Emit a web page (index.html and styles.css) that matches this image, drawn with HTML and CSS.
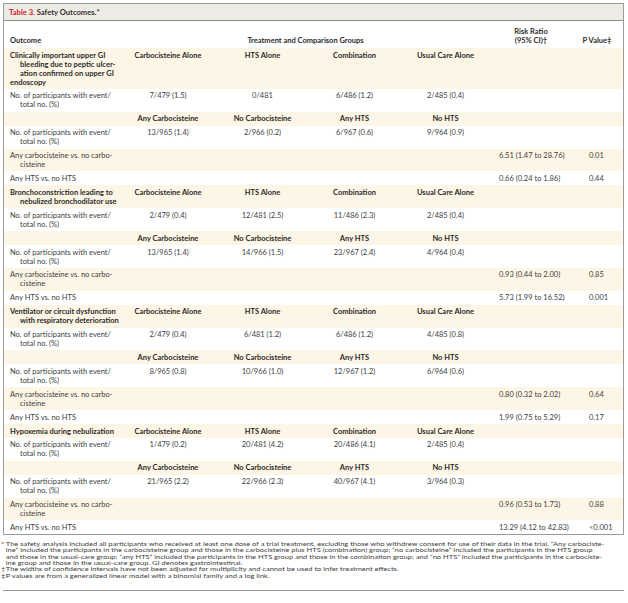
FILE: index.html
```html
<!DOCTYPE html>
<html lang="en">
<head>
<meta charset="utf-8">
<title>Table 3. Safety Outcomes</title>
<link rel="stylesheet" href="styles.css">
</head>
<body>
<div class="page">
  <div class="box">
    <div class="title"><span class="tnum">Table 3.</span> Safety Outcomes.*</div>
    <table class="tbl">
      <colgroup>
        <col class="w1"><col class="w2"><col class="w3"><col class="w4"><col class="w5"><col class="w6"><col class="w7">
      </colgroup>
      <thead>
        <tr>
          <th class="out">Outcome</th>
          <th colspan="4">Treatment and Comparison Groups</th>
          <th><span class="ln">Risk Ratio</span><span class="ln">(95% CI)†</span></th>
          <th>P Value‡</th>
        </tr>
      </thead>
      <tbody>
        <tr class="grp">
          <td class="out b"><span class="ln">Clinically important upper GI</span><span class="ln ind">bleeding due to peptic ulcer-</span><span class="ln ind">ation confirmed on upper GI</span><span class="ln">endoscopy</span></td>
          <td class="b">Carbocisteine Alone</td><td class="b">HTS Alone</td><td class="b">Combination</td><td class="b">Usual Care Alone</td><td></td><td></td>
        </tr>
        <tr>
          <td class="out"><span class="ln">No. of participants with event/</span><span class="ln ind">total no. (%)</span></td>
          <td>7/479 (1.5)</td><td>0/481</td><td>6/486 (1.2)</td><td>2/485 (0.4)</td><td></td><td></td>
        </tr>
        <tr>
          <td class="out"></td>
          <td class="b">Any Carbocisteine</td><td class="b">No Carbocisteine</td><td class="b">Any HTS</td><td class="b">No HTS</td><td></td><td></td>
        </tr>
        <tr>
          <td class="out"><span class="ln">No. of participants with event/</span><span class="ln ind">total no. (%)</span></td>
          <td>13/965 (1.4)</td><td>2/966 (0.2)</td><td>6/967 (0.6)</td><td>9/964 (0.9)</td><td></td><td></td>
        </tr>
        <tr>
          <td class="out"><span class="ln">Any carbocisteine vs. no carbo-</span><span class="ln ind">cisteine</span></td>
          <td></td><td></td><td></td><td></td><td class="rr">6.51 (1.47 to 28.76)</td><td class="pv">0.01</td>
        </tr>
        <tr>
          <td class="out">Any HTS vs. no HTS</td>
          <td></td><td></td><td></td><td></td><td class="rr">0.66 (0.24 to 1.86)</td><td class="pv">0.44</td>
        </tr>

        <tr class="grp">
          <td class="out b"><span class="ln">Bronchoconstriction leading to</span><span class="ln ind">nebulized bronchodilator use</span></td>
          <td class="b">Carbocisteine Alone</td><td class="b">HTS Alone</td><td class="b">Combination</td><td class="b">Usual Care Alone</td><td></td><td></td>
        </tr>
        <tr>
          <td class="out"><span class="ln">No. of participants with event/</span><span class="ln ind">total no. (%)</span></td>
          <td>2/479 (0.4)</td><td>12/481 (2.5)</td><td>11/486 (2.3)</td><td>2/485 (0.4)</td><td></td><td></td>
        </tr>
        <tr>
          <td class="out"></td>
          <td class="b">Any Carbocisteine</td><td class="b">No Carbocisteine</td><td class="b">Any HTS</td><td class="b">No HTS</td><td></td><td></td>
        </tr>
        <tr>
          <td class="out"><span class="ln">No. of participants with event/</span><span class="ln ind">total no. (%)</span></td>
          <td>13/965 (1.4)</td><td>14/966 (1.5)</td><td>23/967 (2.4)</td><td>4/964 (0.4)</td><td></td><td></td>
        </tr>
        <tr>
          <td class="out"><span class="ln">Any carbocisteine vs. no carbo-</span><span class="ln ind">cisteine</span></td>
          <td></td><td></td><td></td><td></td><td class="rr">0.93 (0.44 to 2.00)</td><td class="pv">0.85</td>
        </tr>
        <tr>
          <td class="out">Any HTS vs. no HTS</td>
          <td></td><td></td><td></td><td></td><td class="rr">5.73 (1.99 to 16.52)</td><td class="pv">0.001</td>
        </tr>

        <tr class="grp">
          <td class="out b"><span class="ln">Ventilator or circuit dysfunction</span><span class="ln ind">with respiratory deterioration</span></td>
          <td class="b">Carbocisteine Alone</td><td class="b">HTS Alone</td><td class="b">Combination</td><td class="b">Usual Care Alone</td><td></td><td></td>
        </tr>
        <tr>
          <td class="out"><span class="ln">No. of participants with event/</span><span class="ln ind">total no. (%)</span></td>
          <td>2/479 (0.4)</td><td>6/481 (1.2)</td><td>6/486 (1.2)</td><td>4/485 (0.8)</td><td></td><td></td>
        </tr>
        <tr>
          <td class="out"></td>
          <td class="b">Any Carbocisteine</td><td class="b">No Carbocisteine</td><td class="b">Any HTS</td><td class="b">No HTS</td><td></td><td></td>
        </tr>
        <tr>
          <td class="out"><span class="ln">No. of participants with event/</span><span class="ln ind">total no. (%)</span></td>
          <td>8/965 (0.8)</td><td>10/966 (1.0)</td><td>12/967 (1.2)</td><td>6/964 (0.6)</td><td></td><td></td>
        </tr>
        <tr>
          <td class="out"><span class="ln">Any carbocisteine vs. no carbo-</span><span class="ln ind">cisteine</span></td>
          <td></td><td></td><td></td><td></td><td class="rr">0.80 (0.32 to 2.02)</td><td class="pv">0.64</td>
        </tr>
        <tr>
          <td class="out">Any HTS vs. no HTS</td>
          <td></td><td></td><td></td><td></td><td class="rr">1.99 (0.75 to 5.29)</td><td class="pv">0.17</td>
        </tr>

        <tr class="grp">
          <td class="out b">Hypoxemia during nebulization</td>
          <td class="b">Carbocisteine Alone</td><td class="b">HTS Alone</td><td class="b">Combination</td><td class="b">Usual Care Alone</td><td></td><td></td>
        </tr>
        <tr>
          <td class="out"><span class="ln">No. of participants with event/</span><span class="ln ind">total no. (%)</span></td>
          <td>1/479 (0.2)</td><td>20/481 (4.2)</td><td>20/486 (4.1)</td><td>2/485 (0.4)</td><td></td><td></td>
        </tr>
        <tr>
          <td class="out"></td>
          <td class="b">Any Carbocisteine</td><td class="b">No Carbocisteine</td><td class="b">Any HTS</td><td class="b">No HTS</td><td></td><td></td>
        </tr>
        <tr>
          <td class="out"><span class="ln">No. of participants with event/</span><span class="ln ind">total no. (%)</span></td>
          <td>21/965 (2.2)</td><td>22/966 (2.3)</td><td>40/967 (4.1)</td><td>3/964 (0.3)</td><td></td><td></td>
        </tr>
        <tr>
          <td class="out"><span class="ln">Any carbocisteine vs. no carbo-</span><span class="ln ind">cisteine</span></td>
          <td></td><td></td><td></td><td></td><td class="rr">0.96 (0.53 to 1.73)</td><td class="pv">0.88</td>
        </tr>
        <tr>
          <td class="out">Any HTS vs. no HTS</td>
          <td></td><td></td><td></td><td></td><td class="rr">13.29 (4.12 to 42.83)</td><td class="pv">&lt;0.001</td>
        </tr>
      </tbody>
    </table>
  </div>
  <div class="notes">
    <div class="note"><span class="mark">*</span><span class="ln">The safety analysis included all participants who received at least one dose of a trial treatment, excluding those who withdrew consent for use of their data in the trial. “Any carbociste-</span><span class="ln">ine” included the participants in the carbocisteine group and those in the carbocisteine plus HTS (combination) group; “no carbocisteine” included the participants in the HTS group</span><span class="ln">and those in the usual-care group; “any HTS” included the participants in the HTS group and those in the combination group; and “no HTS” included the participants in the carbociste-</span><span class="ln">ine group and those in the usual-care group. GI denotes gastrointestinal.</span></div>
    <div class="note"><span class="mark">†</span><span class="ln">The widths of confidence intervals have not been adjusted for multiplicity and cannot be used to infer treatment effects.</span></div>
    <div class="note"><span class="mark">‡</span><span class="ln">P values are from a generalized linear model with a binomial family and a log link.</span></div>
  </div>
  <div class="rule"></div>
</div>
</body>
</html>
```

FILE: styles.css
```css
* { box-sizing: border-box; }
html, body { margin: 0; padding: 0; background: #ffffff; }
body { font-family: Lato, "Open Sans", "Liberation Sans", sans-serif; color: #3d3d3d; }

.page { width: 628px; padding: 3px 4px 0 3px; }

.box { border: 1px solid #9b9b9b; }

.title {
  background: #eeeae5;
  height: 17px;
  border-bottom: 1px solid #8e8e8e;
  padding-left: 5px;
  font-size: 7.6px;
  font-weight: 700;
  line-height: 16px;
  color: #333333;
}
.tnum { color: #d0202e; }

.tbl {
  width: 100%;
  border-collapse: collapse;
  table-layout: fixed;
  font-size: 7.5px;
  line-height: 9px;
}
.w1 { width: 116px; }
.w2 { width: 96px; }
.w3 { width: 93px; }
.w4 { width: 91px; }
.w5 { width: 91px; }
.w6 { width: 80px; }
.w7 { width: 52px; }

.tbl th, .tbl td {
  padding: 2.5px 0 2.4px;
  vertical-align: top;
  text-align: center;
  font-weight: 400;
  white-space: nowrap;
}
.tbl thead th {
  vertical-align: bottom;
  padding: 6px 0 3px;
  font-weight: 700;
  color: #2b2b2b;
}
.tbl tbody tr:nth-child(odd) { background: #fdf5e5; }

.tbl .out { text-align: left; padding-left: 6px; }
.tbl .b { font-weight: 700; color: #2b2b2b; }
.ln { display: block; white-space: nowrap; }
.ind { padding-left: 10px; }
.tbl .rr { text-align: left; padding-left: 8px; }
.tbl .pv { text-align: left; padding-left: 18px; }

/* footnotes: the reference renders them vertically compressed */
.notes {
  margin: 6px 0 0 -2px;
  font-size: 7.5px;
  line-height: 8.4px;
  color: #3d3d3d;
  transform: scaleY(0.762);
  transform-origin: 0 0;
}
.note { position: relative; padding-left: 4.8px; }
.mark { position: absolute; left: 0; top: 0; }

.rule { margin-top: -2px; border-top: 1px solid #9b9b9b; }
```
